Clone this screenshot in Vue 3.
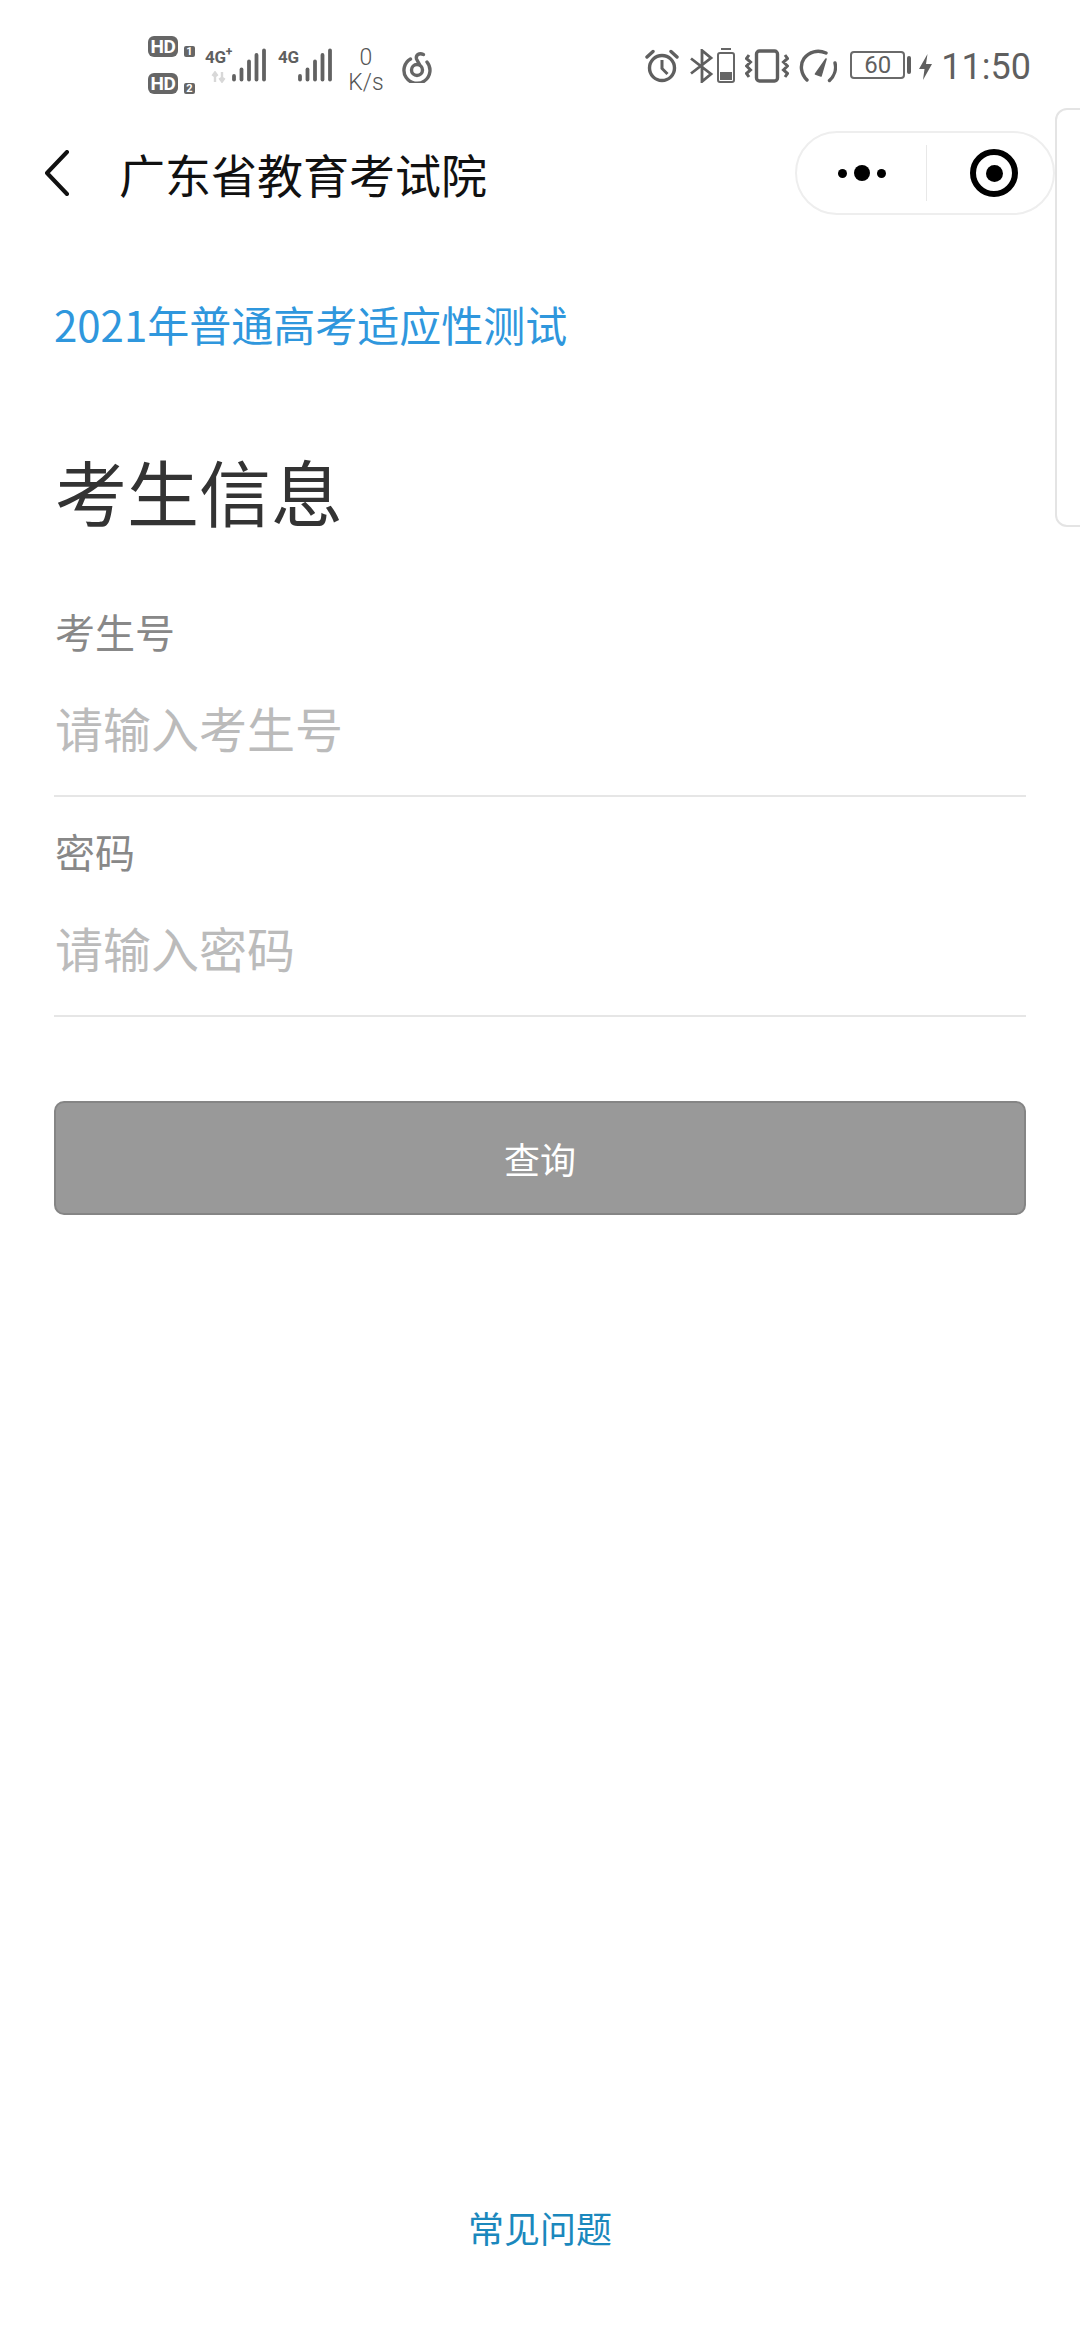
<template>
  <div class="page">
    <!-- system status bar -->
    <div class="status-bar">
      <div class="status-left">
        <div class="sim-stack">
          <div class="sim-row"><span class="hd">HD</span><span class="sim-no">1</span></div>
          <div class="sim-row"><span class="hd">HD</span><span class="sim-no">2</span></div>
        </div>
        <div class="signal first">
          <span class="net">4G<sup>+</sup></span>
          <svg class="arrows" width="20" height="12" viewBox="0 0 20 12">
            <path d="M5 11V2M2.500 5L5 1.500 7.500 5M12 1V10M9.500 7L12 10.500 14.500 7" fill="none" stroke="#d8d8d8" stroke-width="2.400" />
          </svg>
          <svg class="bars" width="36" height="34" viewBox="0 0 36 34">
            <line v-for="b in bars" :key="b.x" :x1="b.x" :x2="b.x" :y1="b.y" y2="31.500" stroke="#626262" stroke-width="3.800" stroke-linecap="round" />
          </svg>
        </div>
        <div class="signal second">
          <span class="net">4G</span>
          <svg class="bars" width="36" height="34" viewBox="0 0 36 34">
            <line v-for="b in bars" :key="b.x" :x1="b.x" :x2="b.x" :y1="b.y" y2="31.500" stroke="#626262" stroke-width="3.800" stroke-linecap="round" />
          </svg>
        </div>
        <div class="speed"><span>0</span><span>K/s</span></div>
        <svg class="netease" width="32" height="32" viewBox="0 0 32 32" fill="none" stroke="#666" stroke-width="3.400" stroke-linecap="round">
          <path d="M9.500 8A13 13 0 1 0 26 11" />
          <path d="M22.500 3.500C18 1.500 14.500 4 15.500 8L18.500 13.500" />
          <circle cx="16" cy="19" r="5.500" />
        </svg>
      </div>
      <div class="status-right">
        <svg class="alarm" width="34" height="34" viewBox="0 0 34 34" fill="none" stroke="#5f5f5f" stroke-width="3.400">
          <circle cx="17" cy="19" r="12.500" />
          <path d="M17 11V19.500L22.500 25" stroke-width="3" />
          <path d="M2 8L8 2.500M32 8L26 2.500" stroke-linecap="round" />
        </svg>
        <svg class="bt" width="25" height="34" viewBox="0 0 25 34" fill="none" stroke="#5f5f5f" stroke-width="2.800">
          <path d="M1 9.500L21 25 12 32.500V1.500L21 9 1 24.500" />
        </svg>
        <div class="mini-battery"><i /></div>
        <svg class="vibrate" width="44" height="34" viewBox="0 0 44 34" fill="none" stroke="#5f5f5f">
          <rect x="11.500" y="2" width="21" height="30" rx="3" stroke-width="3.400" />
          <path d="M4 6L1.500 9.500 5.500 13 1.500 17 5.500 21 1.500 24.500 4 28M40 6L42.500 9.500 38.500 13 42.500 17 38.500 21 42.500 24.500 40 28" stroke-width="3" />
        </svg>
        <svg class="gauge" width="38" height="34" viewBox="0 0 38 34" fill="none" stroke="#5f5f5f" stroke-linecap="round">
          <path d="M8 31C2 25 .500 16 5 9.500 10 2.500 19 .500 27 4" stroke-width="3.400" />
          <path d="M36 14C37.500 20 35.500 27 30.500 31.500" stroke-width="3.400" />
          <path d="M16.500 25L27 10 22 27Z" fill="#5f5f5f" stroke-width="1.600" stroke-linejoin="round" />
        </svg>
        <div class="battery"><span>60</span></div>
        <i class="battery-cap" />
        <svg class="bolt" width="13" height="26" viewBox="0 0 13 26">
          <path d="M8.500 0L0 15H5.500L4 26 13 10H7Z" fill="#5f5f5f" />
        </svg>
        <span class="time">11:50</span>
      </div>
    </div>

    <!-- mini program nav -->
    <div class="nav">
      <svg class="back" width="26" height="46" viewBox="0 0 26 46" fill="none" stroke="#111" stroke-width="4" stroke-linecap="round" stroke-linejoin="round">
        <path d="M23 2L3 23 23 44" />
      </svg>
      <div class="nav-title">广东省教育考试院</div>
      <div class="capsule">
        <div class="dots"><i /><i class="big" /><i /></div>
        <div class="capsule-line" />
        <div class="target"><i /></div>
      </div>
    </div>
    <div class="side-panel" />

    <div class="content">
      <div class="exam-name">2021年普通高考适应性测试</div>
      <h1 class="heading">考生信息</h1>

      <div v-for="f in fields" :key="f.label" class="field">
        <label class="field-label">{{ f.label }}</label>
        <input class="field-input" :type="f.type" :placeholder="f.placeholder" />
      </div>

      <button class="submit" type="button">查询</button>
    </div>

    <div class="footer-link">常见问题</div>
  </div>
</template>

<script setup>
const fields = [
  { label: '考生号', placeholder: '请输入考生号', type: 'text' },
  { label: '密码', placeholder: '请输入密码', type: 'password' },
]

// signal strength bars, short to tall
const bars = [
  { x: 3, y: 28 },
  { x: 10.500, y: 21.500 },
  { x: 18, y: 13.500 },
  { x: 25.500, y: 7 },
  { x: 33, y: 2.500 },
]
</script>

<style>
html,
body {
  margin: 0;
  background: #fff;
}
</style>

<style scoped>
.page {
  position: relative;
  width: 1080px;
  height: 2340px;
  display: flex;
  flex-direction: column;
  overflow: hidden;
  background: #fff;
  font-family: "Noto Sans CJK SC", "Noto Sans", sans-serif;
}

.status-bar {
  height: 130px;
  box-sizing: border-box;
  padding: 36px 49px 0 148px;
  display: flex;
  justify-content: space-between;
  align-items: flex-start;
  color: #5f5f5f;
  font-family: Roboto, sans-serif;
}
.status-left,
.status-right {
  display: flex;
  align-items: flex-start;
}

.sim-stack {
  display: flex;
  flex-direction: column;
  gap: 16px;
}
.sim-row {
  display: flex;
  align-items: flex-end;
  gap: 6px;
}
.hd {
  width: 30px;
  height: 21px;
  border-radius: 6px;
  background: #666;
  color: #fff;
  font: 700 19px/21px Roboto, sans-serif;
  letter-spacing: -.5px;
  text-align: center;
}
.sim-no {
  width: 11px;
  height: 11px;
  border-radius: 2px;
  background: #666;
  color: #fff;
  font: 700 11px/11px Roboto, sans-serif;
  text-align: center;
}

.signal {
  position: relative;
  display: flex;
  align-items: flex-start;
  margin-top: 12px;
}
.signal.first {
  margin-left: 10px;
  width: 62px;
  justify-content: flex-end;
}
.signal.second {
  margin-left: 11px;
  width: 55px;
  justify-content: flex-end;
}
.net {
  position: absolute;
  left: 0;
  top: 0;
  font: 700 17px/18px Roboto, sans-serif;
  letter-spacing: -.3px;
  color: #5f5f5f;
}
.net sup {
  font-size: 12px;
  line-height: 0;
}
.arrows {
  position: absolute;
  left: 5px;
  top: 23px;
}

.speed {
  margin: 9px 0 0 14px;
  width: 38px;
  display: flex;
  flex-direction: column;
  align-items: center;
  font-size: 23px;
  line-height: 25px;
  font-weight: 300;
  color: #555;
}
.netease {
  margin: 15px 0 0 16px;
}

.status-right {
  margin-top: 13px;
}
.alarm {
  margin-right: 1px;
}
.bt {
  margin-left: 10px;
}
.mini-battery {
  position: relative;
  margin: 3px 0 0 2px;
  width: 18px;
  height: 31px;
  box-sizing: border-box;
  border: 2px solid #666;
  border-radius: 3px;
}
.mini-battery::before {
  content: "";
  position: absolute;
  left: 2px;
  right: 2px;
  top: -6px;
  height: 2px;
  background: #666;
}
.mini-battery i {
  position: absolute;
  left: 1px;
  right: 1px;
  bottom: 1px;
  height: 8px;
  background: #666;
}
.vibrate {
  margin-left: 10px;
}
.gauge {
  margin-left: 10px;
}
.battery {
  margin: 2px 0 0 13px;
  width: 55px;
  height: 28px;
  box-sizing: border-box;
  border: 2px solid #6a6a6a;
  border-radius: 4px;
  font-size: 24px;
  line-height: 24px;
  text-align: center;
}
.battery-cap {
  margin: 7px 0 0 2px;
  width: 4px;
  height: 18px;
  border-radius: 2px;
  background: #5f5f5f;
}
.bolt {
  margin: 5px 0 0 8px;
}
.time {
  margin-left: 9px;
  font-size: 36px;
  line-height: 36px;
}

.nav {
  height: 86px;
  display: flex;
  align-items: center;
  padding-left: 44px;
}
.nav-title {
  margin-left: 49px;
  font-size: 46px;
  color: #111;
  line-height: 60px;
}
.capsule {
  margin-left: auto;
  margin-right: 25px;
  width: 260px;
  height: 84px;
  box-sizing: border-box;
  border: 2px solid #eee;
  border-radius: 42px;
  display: flex;
  align-items: center;
}
.dots {
  width: 129px;
  display: flex;
  justify-content: center;
  align-items: center;
  gap: 7px;
}
.dots i {
  width: 9px;
  height: 9px;
  border-radius: 50%;
  background: #000;
}
.dots i.big {
  width: 16px;
  height: 16px;
}
.capsule-line {
  width: 1px;
  height: 56px;
  background: #e8e8e8;
}
.target {
  margin-left: 43px;
  width: 48px;
  height: 48px;
  box-sizing: border-box;
  border: 6px solid #000;
  border-radius: 50%;
  display: flex;
  align-items: center;
  justify-content: center;
}
.target i {
  width: 17px;
  height: 17px;
  border-radius: 50%;
  background: #000;
}

.side-panel {
  position: absolute;
  left: 1055px;
  top: 108px;
  width: 40px;
  height: 419px;
  box-sizing: border-box;
  border: 2px solid #e4e4e4;
  border-radius: 12px;
}

.content {
  padding: 76px 54px 0;
  display: flex;
  flex-direction: column;
}
.exam-name {
  font-size: 42px;
  line-height: 64px;
  color: #2f97dd;
}
.heading {
  margin: 0;
  margin-top: 84px;
  padding-left: 1px;
  font-size: 72px;
  line-height: 100px;
  font-weight: 400;
  color: #333;
}
.field {
  display: flex;
  flex-direction: column;
  height: 220px;
  padding-top: 24px;
  box-sizing: border-box;
  border-bottom: 2px solid #e6e6e6;
}
.heading + .field {
  margin-top: 37px;
}
.field-label {
  padding-left: 1px;
  font-size: 40px;
  line-height: 60px;
  color: #888;
}
.field-input {
  margin-top: 33px;
  padding: 0 0 0 1px;
  height: 66px;
  border: 0;
  outline: 0;
  background: transparent;
  font: 400 48px/66px "Noto Sans CJK SC", sans-serif;
}
.field-input::placeholder {
  color: #bbb;
  opacity: 1;
}
.submit {
  margin-top: 84px;
  height: 114px;
  border: 2px solid #858585;
  border-radius: 10px;
  background: #999;
  color: #fff;
  font: 400 36px "Noto Sans CJK SC", sans-serif;
}
.footer-link {
  margin-top: auto;
  margin-bottom: 86px;
  text-align: center;
  font-size: 36px;
  line-height: 54px;
  color: #1b88bd;
}
</style>
